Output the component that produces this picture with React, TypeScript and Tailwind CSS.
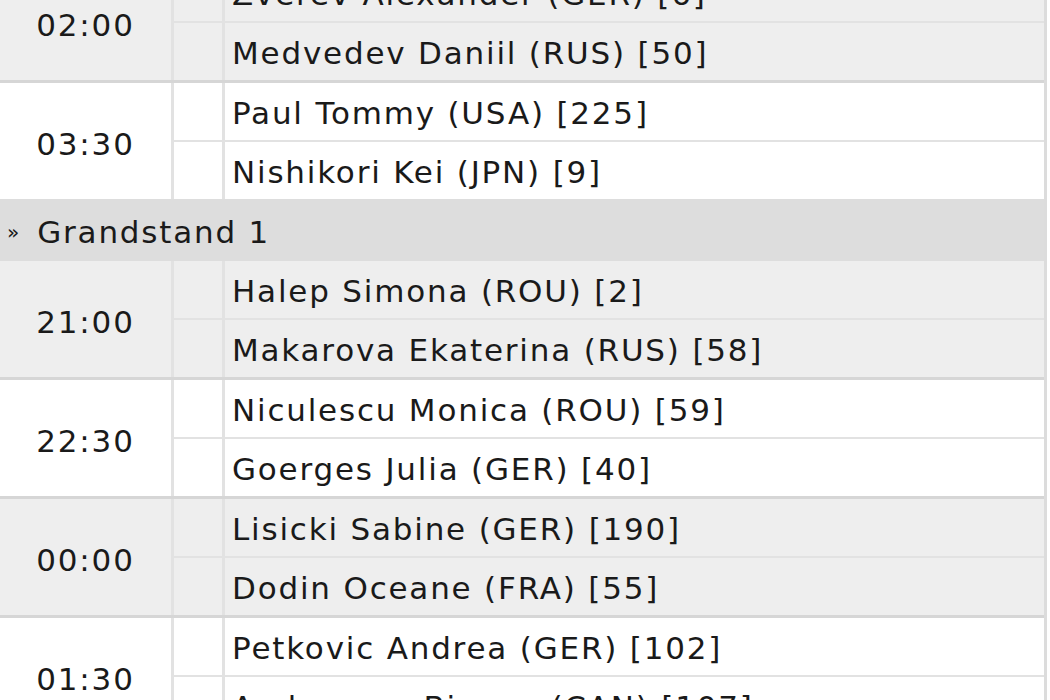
import React from 'react';

// Order of play: court header rows and matches with two players each
type Match = { time: string; players: [string, string] };
type Block = { court?: string; matches: Match[] };

const schedule: Block[] = [
    {
        matches: [
            { time: '02:00', players: ['Zverev Alexander (GER) [6]', 'Medvedev Daniil (RUS) [50]'] },
            { time: '03:30', players: ['Paul Tommy (USA) [225]', 'Nishikori Kei (JPN) [9]'] },
        ],
    },
    {
        court: 'Grandstand 1',
        matches: [
            { time: '21:00', players: ['Halep Simona (ROU) [2]', 'Makarova Ekaterina (RUS) [58]'] },
            { time: '22:30', players: ['Niculescu Monica (ROU) [59]', 'Goerges Julia (GER) [40]'] },
            { time: '00:00', players: ['Lisicki Sabine (GER) [190]', 'Dodin Oceane (FRA) [55]'] },
            { time: '01:30', players: ['Petkovic Andrea (GER) [102]', 'Andreescu Bianca (CAN) [107]'] },
        ],
    },
];

const MatchRow: React.FC<{ match: Match; odd: boolean; first: boolean }> = ({ match, odd, first }) => (
    <div
        className={`grid grid-cols-[174px_51px_1fr] grid-rows-[57px_59px] ${odd ? 'bg-[#eeeeee]' : 'bg-white'} ${first ? '' : 'border-t-[3px] border-[#d6d6d6]'}`}
    >
        <div className="row-span-2 flex items-center justify-center pt-[6px] border-r-[3px] border-[#e2e2e2]">
            {match.time}
        </div>
        <div className="border-r-[3px] border-[#e2e2e2]" />
        <div className="flex items-center pl-[7px] pt-[3px]">{match.players[0]}</div>
        <div className="border-r-[3px] border-t-2 border-[#e2e2e2]" />
        <div className="flex items-center pl-[7px] pt-[3px] border-t-2 border-[#e2e2e2]">{match.players[1]}</div>
    </div>
);

export default function App() {
    return (
        <div className="w-[1050px] h-[700px] overflow-hidden bg-white">
            <div
                className="-mt-[36px] w-[1047px] border-r-[3px] border-[#dcdcdc] text-[31px] leading-[36px] tracking-[1.8px] text-[#1a1a1a]"
                style={{ fontFamily: '"DejaVu Sans", Verdana, sans-serif' }}
            >
                {schedule.map((block, bi) => (
                    <div key={bi}>
                        {block.court && (
                            <div className="h-[62px] flex items-center bg-[#dddddd] pl-[7px] pt-[3px]">
                                <span className="text-[20px] tracking-normal mr-[18px]">»</span>
                                {block.court}
                            </div>
                        )}
                        {block.matches.map((m, i) => (
                            <MatchRow key={m.time} match={m} odd={i % 2 === 0} first={i === 0} />
                        ))}
                    </div>
                ))}
            </div>
        </div>
    );
}
